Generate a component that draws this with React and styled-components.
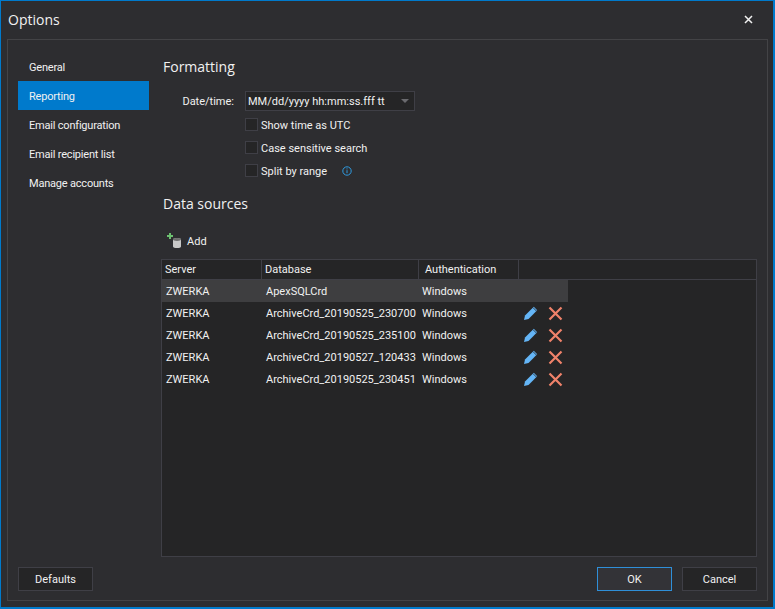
import React from "react";
import styled, { createGlobalStyle } from "styled-components";

const Global = createGlobalStyle`
  html, body { margin: 0; padding: 0; background: #2d2d30; }
  * { box-sizing: border-box; }
`;

const Window = styled.div`
  width: 775px; height: 609px; display: flex; flex-direction: column;
  background: #2d2d30; border: 1px solid #007acc; border-width: 1px 2px 2px 1px;
  font-family: "Roboto", "Noto Sans", sans-serif; font-size: 11px; color: #f1f1f1;
  padding: 0 5px 6px 6px;
`;
const TitleBar = styled.div`
  height: 38px; flex: none; display: flex; align-items: center; justify-content: space-between; padding: 0 15px 2px 1px;
`;
const Title = styled.div` font-family: "Open Sans", sans-serif; font-size: 14px; `;
const Body = styled.div`
  flex: 1; min-height: 0; border: 1px solid #434346; padding: 12px 10px 9px 10px; display: flex; flex-direction: column;
`;
const Top = styled.div` flex: 1; min-height: 0; display: flex; `;
const Side = styled.nav` width: 131px; flex: none; display: flex; flex-direction: column; `;
const SideItem = styled.div`
  height: 29px; line-height: 31px; padding-left: 11px; letter-spacing: -0.2px;
  background: ${p => (p.$active ? "#007acc" : "transparent")};
`;
const Main = styled.div` flex: 1; min-width: 0; padding-left: 12px; display: flex; flex-direction: column; `;
const Heading = styled.div`
  font-family: "Open Sans", sans-serif; font-size: 14px; line-height: 20px; padding-left: 2px; margin-top: ${p => p.$top}px;
`;
const FormRow = styled.div` display: flex; align-items: center; height: 20px; margin-top: 14px; `;
const Label = styled.div` width: 73px; text-align: right; margin-right: 11px; `;
const Select = styled.div`
  width: 170px; height: 20px; background: #252526; border: 1px solid #3f3f46; padding: 0 3px 0 2px;
  display: flex; align-items: center; justify-content: space-between; white-space: nowrap;
`;
const Caret = styled.span`
  width: 0; height: 0; margin-right: 2px; border: 4px solid transparent; border-top: 4px solid #6a6a6e; border-bottom: 0;
`;
const Checks = styled.div` display: flex; flex-direction: column; padding: 2px 0 0 84px; `;
const CheckRow = styled.div` height: 23px; display: flex; align-items: center; `;
const CheckText = styled.span` padding-top: 2px; `;
const Box = styled.span` width: 13px; height: 13px; background: #252526; border: 1px solid #3f3f46; margin-right: 3px; flex: none; `;
const InfoIcon = styled.svg` margin-left: 15px; `;
const Toolbar = styled.div` height: 20px; margin-top: 17px; display: flex; align-items: center; padding-left: 6px; gap: 2px; `;
const Grid = styled.div`
  flex: 1; min-height: 0; margin-top: 8px; background: #252526; border: 1px solid #3f3f46; display: flex; flex-direction: column;
`;
const Header = styled.div` display: flex; height: 20px; flex: none; border-bottom: 1px solid #3f3f46; background: #252526; `;
const HeadCell = styled.div`
  width: ${p => p.$w}px; line-height: 19px; padding-left: ${p => p.$pad}px; border-right: 1px solid #3f3f46; flex: none;
`;
const Row = styled.div`
  display: flex; height: 22px; align-items: flex-start; width: 406px; flex: none;
  background: ${p => (p.$selected ? "#3e3e40" : "transparent")};
`;
const Cell = styled.div` width: ${p => p.$w}px; line-height: 24px; padding-left: ${p => p.$pad}px; flex: none; white-space: nowrap; `;
const Actions = styled.div` display: flex; align-items: center; gap: 9px; padding-left: 4px; flex: none; align-self: center; `;
const Footer = styled.div` display: flex; margin-top: 10px; flex: none; justify-content: space-between; `;
const ButtonGroup = styled.div` display: flex; gap: 10px; `;
const Button = styled.div`
  width: 75px; height: 24px; display: flex; align-items: center; justify-content: center;
  background: ${p => (p.$primary ? "#333337" : "#252526")};
  border: 1px solid ${p => (p.$primary ? "#2f8fd8" : "#3f3f46")};
`;

const Pencil = () => (
  <svg width="16" height="16" viewBox="0 0 16 16">
    <path d="M1 15l1-4.5L10.8 1.8l3.4 3.4L5.5 14z" fill="#64b5f6" />
    <path d="M10 2.6l3.4 3.4" stroke="#252526" strokeWidth="0.8" />
  </svg>
);
const Cross = () => (
  <svg width="15" height="15" viewBox="0 0 15 15">
    <path d="M1.5 1.5l12 12M13.5 1.5l-12 12" stroke="#f0826a" strokeWidth="2.2" fill="none" />
  </svg>
);

const rows = [
  ["ApexSQLCrd", true],
  ["ArchiveCrd_20190525_230700"],
  ["ArchiveCrd_20190525_235100"],
  ["ArchiveCrd_20190527_120433"],
  ["ArchiveCrd_20190525_230451"],
];
const nav = ["General", "Reporting", "Email configuration", "Email recipient list", "Manage accounts"];

export default function App() {
  return (
    <>
      <Global />
      <Window>
        <TitleBar>
          <Title>Options</Title>
          <svg width="9" height="9" viewBox="0 0 9 9"><path d="M1 1l7 7M8 1L1 8" stroke="#f1f1f1" strokeWidth="1.5" /></svg>
        </TitleBar>
        <Body>
          <Top>
            <Side>
              {nav.map(n => <SideItem key={n} $active={n === "Reporting"}>{n}</SideItem>)}
            </Side>
            <Main>
              <Heading $top={5}>Formatting</Heading>
              <FormRow>
                <Label>Date/time:</Label>
                <Select>MM/dd/yyyy hh:mm:ss.fff tt<Caret /></Select>
              </FormRow>
              <Checks>
                <CheckRow><Box /><CheckText>Show time as UTC</CheckText></CheckRow>
                <CheckRow><Box /><CheckText>Case sensitive search</CheckText></CheckRow>
                <CheckRow>
                  <Box /><CheckText>Split by range</CheckText>
                  <InfoIcon width="10" height="10" viewBox="0 0 10 10">
                    <circle cx="5" cy="5" r="4.2" fill="none" stroke="#2f9be0" />
                    <path d="M5 4.2v3M5 2.4v1" stroke="#2f9be0" />
                  </InfoIcon>
                </CheckRow>
              </Checks>
              <Heading $top={12}>Data sources</Heading>
              <Toolbar>
                <svg width="18" height="16" viewBox="0 0 18 16">
                  <path d="M3 0v6M0 3h6" stroke="#6cc070" strokeWidth="2" />
                  <path d="M6 6.5c0-2 8-2 8 0v7c0 2-8 2-8 0z" fill="#c8c8c8" />
                  <ellipse cx="10" cy="6.5" rx="4" ry="1.4" fill="#6e6e6e" />
                </svg>
                Add
              </Toolbar>
              <Grid>
                <Header>
                  <HeadCell $w={100} $pad={3}>Server</HeadCell>
                  <HeadCell $w={157} $pad={3}>Database</HeadCell>
                  <HeadCell $w={100} $pad={6}>Authentication</HeadCell>
                </Header>
                {rows.map(([db, sel]) => (
                  <Row key={db} $selected={sel}>
                    <Cell $w={100} $pad={4}>ZWERKA</Cell>
                    <Cell $w={157} $pad={4}>{db}</Cell>
                    <Cell $w={100} $pad={3}>Windows</Cell>
                    {!sel && <Actions><Pencil /><Cross /></Actions>}
                  </Row>
                ))}
              </Grid>
            </Main>
          </Top>
          <Footer>
            <Button>Defaults</Button>
            <ButtonGroup>
              <Button $primary>OK</Button>
              <Button>Cancel</Button>
            </ButtonGroup>
          </Footer>
        </Body>
      </Window>
    </>
  );
}
